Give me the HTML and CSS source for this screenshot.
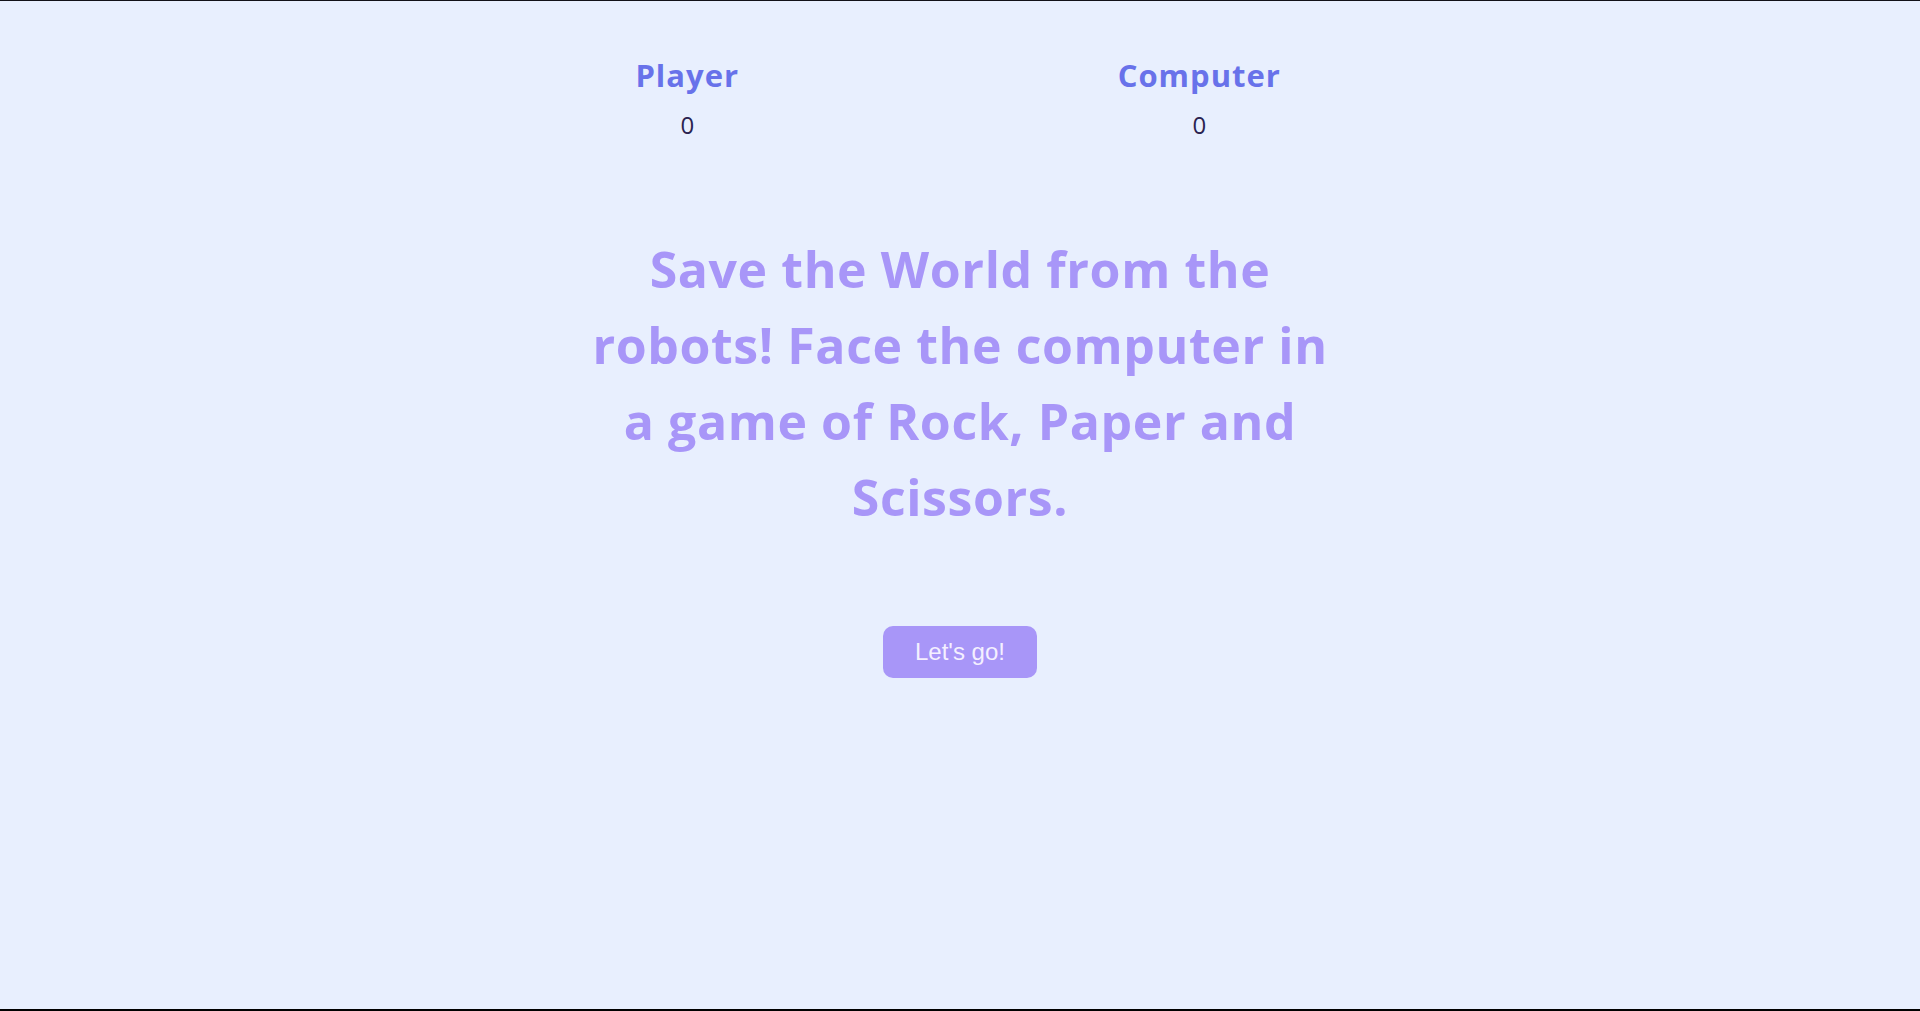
FILE: index.html
```html
<!DOCTYPE html>
<html lang="en">
<head>
<meta charset="utf-8">
<title>Rock Paper Scissors</title>
<link rel="stylesheet" href="styles.css">
</head>
<body>
<main class="page">
  <section class="scoreboard">
    <div class="score score-player">
      <h2 class="score-title">Player</h2>
      <p class="score-value">0</p>
    </div>
    <div class="score score-computer">
      <h2 class="score-title">Computer</h2>
      <p class="score-value">0</p>
    </div>
  </section>
  <h1 class="headline">Save the World from the robots! Face the computer in a game of Rock, Paper and Scissors.</h1>
  <button class="start-btn" type="button">Let's go!</button>
</main>
</body>
</html>
```

FILE: styles.css
```css
* { box-sizing: border-box; }
html, body { margin: 0; padding: 0; }
body {
  background: #e8effe;
  font-family: "Open Sans", "Liberation Sans", sans-serif;
}
.page {
  height: 1011px;
  border-top: 1px solid #111118;
  border-bottom: 2px solid #000;
  display: flex;
  flex-direction: column;
  align-items: center;
  padding-top: 56px;
}
.scoreboard {
  width: 1024px;
  display: flex;
  justify-content: space-around;
}
.score {
  display: flex;
  flex-direction: column;
  align-items: center;
}
.score-player { width: 100px; }
.score-computer { width: 167px; }
.score-title {
  margin: 0;
  font-size: 31px;
  line-height: 36px;
  font-weight: 700;
  letter-spacing: 1px;
  color: #6872ea;
  white-space: nowrap;
}
.score-value {
  margin: 16px 0 0;
  font-size: 24px;
  line-height: 32px;
  color: #2b2350;
}
.headline {
  margin: 90px 0 0;
  width: 768px;
  text-align: center;
  font-size: 50px;
  line-height: 76px;
  font-weight: 700;
  letter-spacing: 0.6px;
  color: #a896f8;
}
.start-btn {
  margin-top: 91px;
  width: 154px;
  height: 52px;
  border: none;
  border-radius: 10px;
  background: #a896f8;
  color: #f4f0ff;
  font-family: "Liberation Sans", Arial, sans-serif;
  font-size: 24px;
  line-height: 28px;
  padding: 0;
  cursor: pointer;
}
```
